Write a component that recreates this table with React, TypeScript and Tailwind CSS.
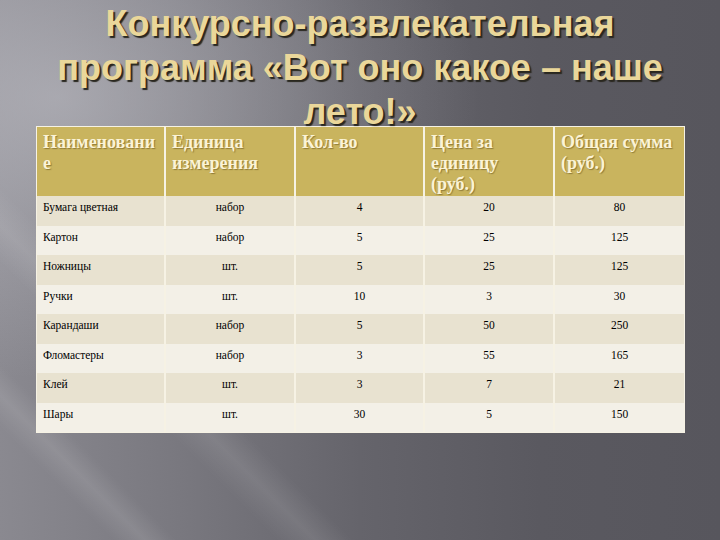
const headers = [
  ["Наименовани", "е"],
  ["Единица", "измерения"],
  ["Кол-во"],
  ["Цена за", "единицу", "(руб.)"],
  ["Общая сумма", "(руб.)"],
];

const rows = [
  ["Бумага цветная", "набор", "4", "20", "80"],
  ["Картон", "набор", "5", "25", "125"],
  ["Ножницы", "шт.", "5", "25", "125"],
  ["Ручки", "шт.", "10", "3", "30"],
  ["Карандаши", "набор", "5", "50", "250"],
  ["Фломастеры", "набор", "3", "55", "165"],
  ["Клей", "шт.", "3", "7", "21"],
  ["Шары", "шт.", "30", "5", "150"],
];

export default function App() {
  return (
    <div className="w-[720px] h-[540px] overflow-hidden bg-[linear-gradient(45deg,transparent_9%,rgba(255,255,255,0.10)_11.5%,transparent_14%,transparent_22%,rgba(255,255,255,0.09)_25%,transparent_28%),radial-gradient(ellipse_at_8%_18%,rgba(205,205,212,0.5),transparent_45%),linear-gradient(90deg,#8a8990_0%,#79787f_25%,#65646b_50%,#5a5960_75%,#57565d_100%)]">
      {/* title */}
      <h1 className="relative z-10 pt-[2px] text-center font-['Liberation_Sans',Arial,sans-serif] text-[36px] font-bold leading-[44px] text-[#ead79a] [text-shadow:2px_2px_1px_#29271f]">
        Конкурсно-развлекательная
        <br />
        программа «Вот оно какое – наше
        <br />
        лето!»
      </h1>

      {/* table */}
      <div className="-mt-[8px] ml-[36px] w-[649px] border border-[#f6f2e4] bg-[#f6f2e4]">
        <div className="grid grid-cols-[127px_128px_127px_128px_129px] gap-x-[2px]">
          {headers.map((h, i) => (
            <div
              key={i}
              className="h-[69px] bg-[#c9b45e] pl-[6px] pt-[5px] font-['Liberation_Serif','Times_New_Roman',serif] text-[18px] font-bold leading-[21px] text-[#fbf3d6] [text-shadow:1px_1px_1px_rgba(90,70,20,0.5)]"
            >
              {h.map((line, j) => (
                <div key={j}>{line}</div>
              ))}
            </div>
          ))}
          {rows.map((r, ri) =>
            r.map((cell, ci) => (
              <div
                key={ri + "-" + ci}
                className={
                  "h-[29.5px] pt-[4px] font-['Liberation_Serif','Times_New_Roman',serif] text-[11.5px] leading-[14px] text-black " +
                  (ri % 2 === 0 ? "bg-[#e8e2d0] " : "bg-[#f3f0e7] ") +
                  (ci === 0 ? "pl-[6px] text-left" : "text-center")
                }
              >
                {cell}
              </div>
            ))
          )}
        </div>
      </div>
    </div>
  );
}
